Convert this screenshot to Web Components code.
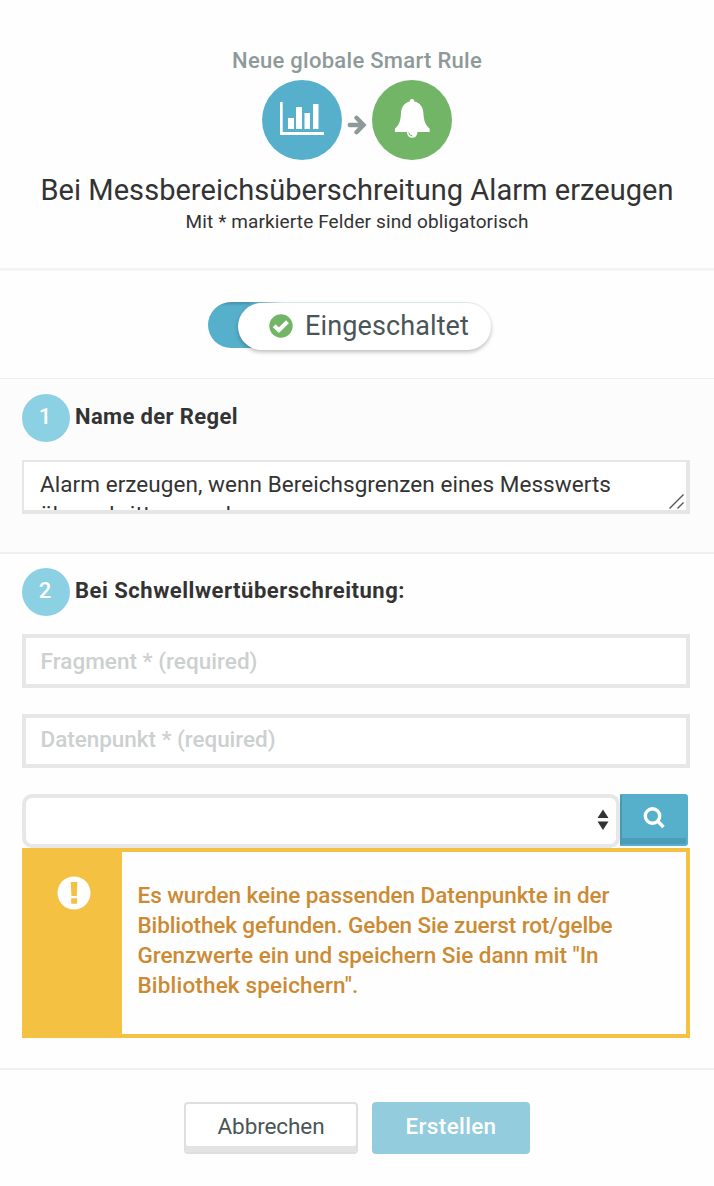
<!DOCTYPE html>
<html lang="de">
<head>
<meta charset="utf-8">
<title>Neue globale Smart Rule</title>
<style>
html,body{margin:0;background:#fefefe}
body{font-family:Roboto,"Liberation Sans",sans-serif;color:#333}
</style>
</head>
<body>
<rule-dialog></rule-dialog>
<script>
const define = (name, html) => customElements.define(name, class extends HTMLElement {
  constructor() {
    super();
    this.attachShadow({mode: 'open'}).innerHTML = html;
  }
});

define('rule-dialog', `
<style>:host{display:flex;flex-direction:column;height:1186px;width:714px;overflow:hidden}</style>
<rule-header></rule-header>
<rule-toggle><fit-text w="164">Eingeschaltet</fit-text></rule-toggle>
<rule-step style="height:175px;background:#fcfcfc">
  <span slot="num">1</span><fit-text slot="title" w="163">Name der Regel</fit-text>
  <rule-textarea></rule-textarea>
</rule-step>
<rule-step style="height:516px;padding-top:14px">
  <span slot="num">2</span><fit-text slot="title" w="330">Bei Schwellwertüberschreitung:</fit-text>
  <rule-input><fit-text w="217">Fragment * (required)</fit-text></rule-input>
  <rule-input style="--shift:-2px"><fit-text w="235">Datenpunkt * (required)</fit-text></rule-input>
  <rule-select></rule-select>
  <rule-alert>
    <fit-text w="472">Es wurden keine passenden Datenpunkte in der</fit-text>
    <fit-text w="475">Bibliothek gefunden. Geben Sie zuerst rot/gelbe</fit-text>
    <fit-text w="461">Grenzwerte ein und speichern Sie dann mit "In</fit-text>
    <fit-text w="221">Bibliothek speichern".</fit-text>
  </rule-alert>
</rule-step>
<rule-footer></rule-footer>`);

define('rule-header', `
<style>
:host{display:flex;flex:none;flex-direction:column;align-items:center;box-sizing:border-box;height:271px;padding-top:46px;border-bottom:3px solid #f4f4f4}
.kicker{font-size:22px;line-height:30px;color:#8e9a99;font-weight:500}
.icons{display:flex;align-items:center;gap:5px;margin-top:4px;height:80px}
.c{width:80px;height:80px}
.arrow{width:20px;height:20px;margin-top:9px}
.title{font-size:29px;line-height:36px;margin-top:12px}
.note{font-size:19px;line-height:26px;margin-top:1px}
svg{display:block}
</style>
<div class="kicker"><fit-text w="250">Neue globale Smart Rule</fit-text></div>
<div class="icons">
<svg class="c" viewBox="0 0 80 80"><circle cx="40" cy="40" r="40" fill="#56b0cc"/><path fill="#fff" d="M18 22h2.700v30H62v3H18zM26 38h6v11h-6zM34 27h6v22h-6zM42.500 33h5.500v16h-5.500zM51 24h5.500v25h-5.500z"/></svg>
<svg class="arrow" viewBox="0 0 20 20"><path d="M2.800 10h13M9.500 2.800 16.500 10 9.500 17.200" fill="none" stroke="#8e9a99" stroke-width="4.400" stroke-linecap="round"/></svg>
<svg class="c" viewBox="0 0 80 80"><circle cx="40" cy="40" r="40" fill="#72b566"/><path fill="#fff" d="M40 19c1.600 0 2.400 1 2.300 2.600C48 22.800 51 27 51.400 33c.4 8 2 12 6.300 15.800v3.300H22.900v-3.300C27.200 45 28.600 41 29 33c.4-6 3.300-10.200 8.800-11.400C37.600 20 38.500 19 40 19z"/><circle cx="40.200" cy="52.500" r="5.200" fill="#fff"/><path d="M36.700 52.500a3.600 3.600 0 0 0 3.600 3.300" fill="none" stroke="#72b566" stroke-width="1"/></svg>
</div>
<div class="title"><fit-text w="633">Bei Messbereichsüberschreitung Alarm erzeugen</fit-text></div>
<div class="note"><fit-text w="343">Mit * markierte Felder sind obligatorisch</fit-text></div>`);

define('rule-toggle', `
<style>
:host{display:block;flex:none;box-sizing:border-box;height:108px;padding:31px 0 0 208px;border-bottom:1px solid #eee}
.track{width:252px;height:46px;padding-left:30px;border-radius:23px;background:linear-gradient(90deg,transparent 40px,#e4f1f4 75px) 0 0/100% 100%,linear-gradient(#438fa8,#56b0cc 4px)}
.knob{display:flex;align-items:center;box-sizing:border-box;width:253px;height:47px;border-radius:24px;background:#fff;padding:0 0 2px 31px;position:relative;top:1px;box-shadow:0 2px 4px #0004;font-size:27px;line-height:32px;color:#4a5557}
svg{width:24px;height:24px;margin:1px 12px 0 0}
</style>
<div class="track"><div class="knob">
<svg viewBox="0 0 24 24"><circle cx="12" cy="12" r="11.700" fill="#72b566"/><path d="M5.200 11.700l4.700 4.500 8.600-8.400" fill="none" stroke="#fff" stroke-width="4"/></svg><slot></slot></div></div>`);

define('rule-step', `
<style>
:host{display:block;box-sizing:border-box;padding:15px 24px 0 22px;border-bottom:2px solid #f0f0f0;flex:none}
.head{display:flex;height:48px;gap:5px;font-size:22px;line-height:46px;font-weight:700}
.num{box-sizing:border-box;width:48px;height:48px;padding-right:2px;border-radius:50%;background:#8cd1e3;color:#fff;text-align:center;font-weight:500}
</style>
<div class="head"><div class="num"><slot name="num"></slot></div><slot name="title"></slot></div>
<slot></slot>`);

define('rule-textarea', `
<style>
:host{display:block;box-sizing:border-box;height:54px;margin-top:18px;border:2px solid #e5e7e6;border-right-width:4px;border-bottom-width:4px;background:#fff;overflow:hidden;padding:7px 0 0 16px;font-size:22.500px;line-height:30px;position:relative}
svg{position:absolute;right:0;bottom:0;width:20px;height:18px}
div{height:30px}
</style>
<div><fit-text w="571">Alarm erzeugen, wenn Bereichsgrenzen eines Messwerts</fit-text></div>
<div><fit-text w="216">überschritten werden</fit-text></div>
<svg viewBox="0 0 20 18"><path d="M3.500 16.500 17.500 2.500M11.500 16.500l6-6" stroke="#555" stroke-width="1.400"/></svg>`);

define('rule-input', `
<style>
:host{display:block;box-sizing:border-box;height:54px;margin:18px 0 26px;border:4px solid #e5e8e7;padding-left:14.500px;font-size:22.500px;line-height:46px;color:#ccd0cf;font-weight:500;background:#fff}
div{margin-top:var(--shift,0px)}
</style><div><slot></slot></div>`);

define('rule-select', `
<style>
:host{display:flex;height:53px}
.sel{box-sizing:border-box;width:598px;height:54px;border:4px solid #e5e8e7;border-radius:10px;background:#fff;display:flex;justify-content:flex-end;align-items:center;padding:0 6.500px 3px 0}
.sel svg{width:14px;height:22px}
.btn{box-sizing:border-box;width:68px;height:52px;background:#56b0cc;border:2px solid #56b0cc;border-left-color:#489ab4;border-radius:0 3px 3px 0;box-shadow:inset 0 -6px #4b9db8;display:flex;justify-content:center;padding-top:11px}
.btn svg{width:22px;height:22px}
</style>
<div class="sel"><svg viewBox="0 0 14 22"><path fill="#333" d="M1.500 9h11L7 .500zM1.500 12.500h11L7 21z"/></svg></div>
<div class="btn"><svg viewBox="0 0 22 22"><circle cx="9.500" cy="9" r="7.200" fill="none" stroke="#fff" stroke-width="3.400"/><path d="M14.500 14l6 6" stroke="#fff" stroke-width="3.600"/></svg></div>`);

define('rule-alert', `
<style>
:host{display:flex;box-sizing:border-box;height:190px;border:4px solid #f4c143;background:#fefefe;margin-top:1px;font-size:22.500px;line-height:30px;color:#cc8a33;font-weight:500}
.side{width:96px;background:#f4c143;flex:none}
svg{display:block;width:34px;height:34px;margin:24px 0 0 30.500px}
.msg{display:flex;flex-direction:column;align-items:flex-start;padding:28px 0 0 15.500px}
</style>
<div class="side"><svg viewBox="0 0 34 34"><circle cx="17" cy="17" r="16.500" fill="#fff"/><path fill="#f4c143" d="M13.800 6h6.600l-.6 14h-5.400zM14.200 22.300h6v5.400h-6z"/></svg></div>
<div class="msg"><slot></slot></div>`);

define('rule-footer', `
<style>
:host{display:flex;flex:none;justify-content:center;gap:14px;padding-top:32px;padding-bottom:32px}
div{box-sizing:border-box;height:52px;border-radius:4px;font-size:22.500px;line-height:45px;text-align:center}
.cancel{width:174px;border:2px solid #dce1e0;box-shadow:inset 0 -6px #e3e3e3;color:#4a5557;background:#fff}
.ok{width:158px;border:2px solid #93ccdd;background:#93ccdd;color:#fff;font-weight:500}
</style>
<div class="cancel"><fit-text w="107">Abbrechen</fit-text></div>
<div class="ok"><fit-text w="91">Erstellen</fit-text></div>`);

/* One line of text, tracked so that it spans the width given in "w". */
customElements.define('fit-text', class extends HTMLElement {
  connectedCallback() {
    if (!this.shadowRoot) this.attachShadow({mode: 'open'}).innerHTML =
      '<style>:host{display:inline-block;white-space:nowrap;flex:none}</style><slot></slot>';
    const gap = this.getAttribute('w') - this.getBoundingClientRect().width;
    this.style.letterSpacing = gap / this.textContent.length + 'px';
  }
});
</script>
</body>
</html>
